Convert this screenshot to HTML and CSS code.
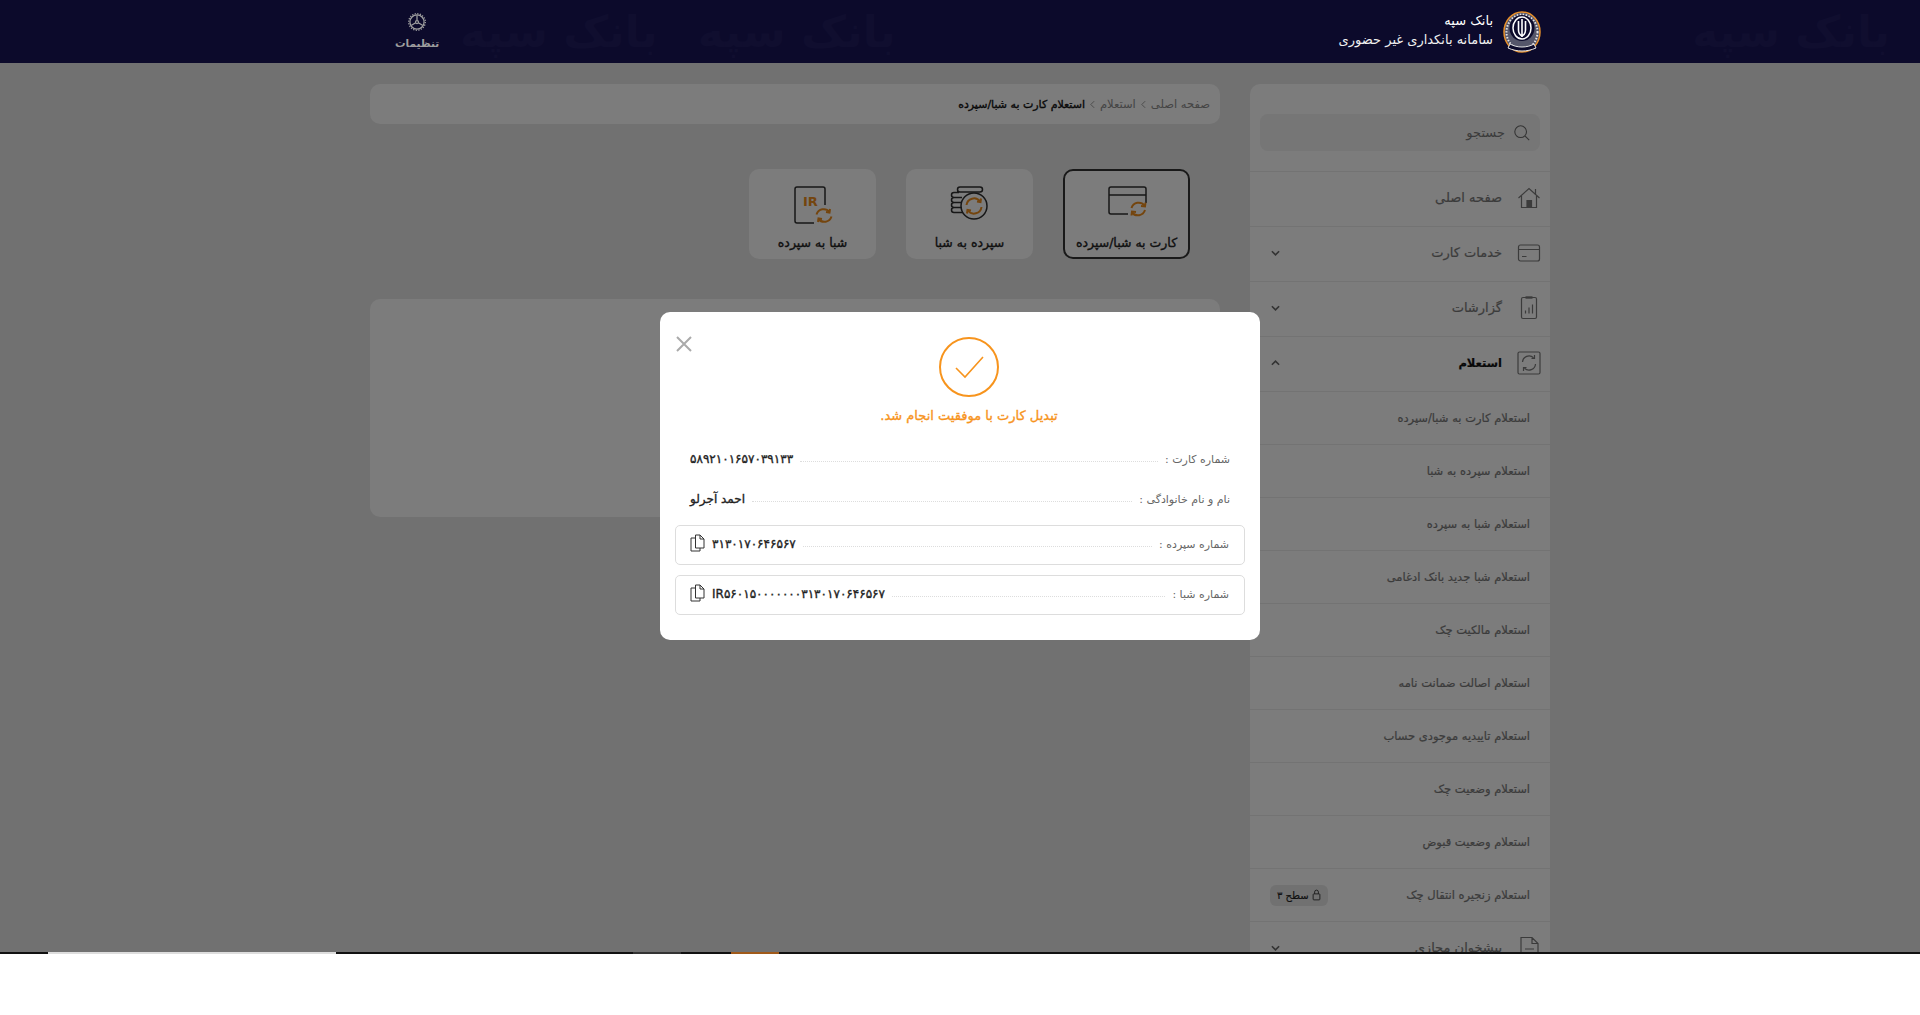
FILE: index.html
```html
<!DOCTYPE html>
<html lang="fa" dir="rtl">
<head>
    <meta charset="utf-8">
    <title>بانک سپه</title>
    <link rel="stylesheet" href="styles.css">
</head>
<body>
<div class="page">
    <header class="topbar">
        <div class="watermark">
            <span class="wm-right">بانک سپه</span><span>بانک سپه</span><span>بانک سپه</span>
        </div>
        <div class="brand">
            <svg class="logo" viewBox="0 0 38 42">
                <ellipse cx="19" cy="21" rx="18" ry="20" fill="#55566a" stroke="#e8902a" stroke-width="1.500"/>
                <ellipse cx="19" cy="21" rx="15.500" ry="17.500" fill="none" stroke="#e4e4e4" stroke-width="2" stroke-dasharray="1.500 1.500"/>
                <ellipse cx="19" cy="17" rx="12.500" ry="13" fill="#0c0a2b"/>
                <ellipse cx="19" cy="17" rx="9" ry="11" fill="none" stroke="#fff" stroke-width="1.500"/>
                <path d="M19 8v18M15.500 10v9c0 3 1.500 5 3.500 6M22.500 10v9c0 3-1.500 5-3.500 6" fill="none" stroke="#fff" stroke-width="1.600"/>
                <path d="M7 33c7 4 17 4 24 0l2 4c-9 4-19 4-28 0z" fill="#0c0a2b" stroke="#e4e4e4"/>
            </svg>
            <div class="brand-text">
                <strong>بانک سپه</strong>
                <span>سامانه بانکداری غیر حضوری</span>
            </div>
        </div>
        <a class="settings">
            <svg viewBox="0 0 24 24" width="20" height="20" fill="none" stroke="#a0a0a0" stroke-width="1.500">
                <circle cx="12" cy="12" r="8.500"/>
                <circle cx="12" cy="12" r="10" stroke-dasharray="1.500 1.640"/>
                <circle cx="12" cy="12" r="1.800"/>
                <path d="M12 10V4M10.400 13l-5 3M13.600 13l5 3"/>
            </svg>
            <span>تنظیمات</span>
        </a>
    </header>

    <div class="content">
        <aside class="sidebar">
            <div class="search-wrap">
                <div class="search">
                    <svg viewBox="0 0 20 20" width="18" height="18" fill="none" stroke="#666" stroke-width="1.200">
                        <circle cx="8.500" cy="8.500" r="6.500"/><path d="M13.500 13.500 18 18"/>
                    </svg>
                    <span>جستجو</span>
                </div>
            </div>
            <ul class="menu">
                <li class="menu-item">
                    <svg class="menu-icon" viewBox="0 0 24 24"><path d="M1.500 12 12 2.500 22.500 12M4.500 10v11.500h15V10M18.500 3v6"/><path class="solid" d="M10 14.500h4.500v7H10z"/></svg>
                    <span>صفحه اصلی</span>
                </li>
                <li class="menu-item">
                    <svg class="menu-icon" viewBox="0 0 24 24"><rect x="1.500" y="4" width="21" height="16" rx="2"/><path d="M1.500 8.500h21M5 15.500h4.500"/></svg>
                    <span>خدمات کارت</span>
                    <svg class="chev" viewBox="0 0 10 6"><path d="m1 1 4 4 4-4"/></svg>
                </li>
                <li class="menu-item">
                    <svg class="menu-icon" viewBox="0 0 24 24"><rect x="4.500" y="1.500" width="15" height="21" rx="1.500"/><path d="M8.500 1.500h7" stroke-width="2.400"/><path d="M8.500 17.500v-3M12 17.500v-6M15.500 17.500V8.500"/></svg>
                    <span>گزارشات</span>
                    <svg class="chev" viewBox="0 0 10 6"><path d="m1 1 4 4 4-4"/></svg>
                </li>
                <li class="menu-item open">
                    <svg class="menu-icon" viewBox="0 0 24 24"><rect x="1" y="1" width="22" height="22" rx="1.500"/><path d="M5.500 11a6.500 6.500 0 0 1 11-4.300M18.500 13a6.500 6.500 0 0 1-11 4.300M17.500 4v3.500h-3M6.500 20v-3.500h3"/></svg>
                    <span>استعلام</span>
                    <svg class="chev" viewBox="0 0 10 6"><path d="m1 5 4-4 4 4"/></svg>
                </li>
                <li class="sub-item">استعلام کارت به شبا/سپرده</li>
                <li class="sub-item">استعلام سپرده به شبا</li>
                <li class="sub-item">استعلام شبا به سپرده</li>
                <li class="sub-item">استعلام شبا جدید بانک ادغامی</li>
                <li class="sub-item">استعلام مالکیت چک</li>
                <li class="sub-item">استعلام اصالت ضمانت نامه</li>
                <li class="sub-item">استعلام تاییدیه موجودی حساب</li>
                <li class="sub-item">استعلام وضعیت چک</li>
                <li class="sub-item">استعلام وضعیت قبوض</li>
                <li class="sub-item">
                    <span>استعلام زنجیره انتقال چک</span>
                    <span class="level">
                        <svg viewBox="0 0 12 16" width="9" height="12" fill="none" stroke="#333" stroke-width="1.200"><rect x="1.500" y="6.500" width="9" height="8" rx="1"/><path d="M3.500 6.500V4a2.500 2.500 0 0 1 5 0v2.500"/></svg>
                        سطح ۳
                    </span>
                </li>
                <li class="menu-item">
                    <svg class="menu-icon" viewBox="0 0 24 24"><path d="M4 1.500h11l6 6v15H4zM15 1.500v6h6M8 13h9M8 17h9"/></svg>
                    <span>پیشخوان مجازی</span>
                    <svg class="chev" viewBox="0 0 10 6"><path d="m1 1 4 4 4-4"/></svg>
                </li>
            </ul>
        </aside>

        <main class="main">
            <nav class="crumbs">
                <span>صفحه اصلی</span>
                <svg class="crumb-sep" viewBox="0 0 6 10"><path d="M5 1 1 5l4 4"/></svg>
                <span>استعلام</span>
                <svg class="crumb-sep" viewBox="0 0 6 10"><path d="M5 1 1 5l4 4"/></svg>
                <strong>استعلام کارت به شبا/سپرده</strong>
            </nav>

            <div class="tiles">
                <div class="tile active">
                    <svg class="tile-icon" viewBox="0 0 40 38">
                        <path class="ink" d="M21 28H4a2 2 0 0 1-2-2V3a2 2 0 0 1 2-2h33a2 2 0 0 1 2 2v14M2 9h37"/>
                        <path class="accent" d="M24.500 22a7.500 7.500 0 0 1 13-2.500M38 24a7.500 7.500 0 0 1-13 2.500"/>
                        <path class="accent" d="m38.500 16.500-.5 4-4-.5M24.500 29.500l.5-4 4 .5"/>
                    </svg>
                    <span>کارت به شبا/سپرده</span>
                </div>
                <div class="tile">
                    <svg class="tile-icon" viewBox="0 0 40 38">
                        <path class="ink" d="M10 1h20a2.500 2.500 0 0 1 0 5H10a2.500 2.500 0 0 1 0-5zM7 6h8M4 6.500a2.500 2.500 0 0 0 0 5h8M4 6.500h5M4 11.500a2.500 2.500 0 0 0 0 5h7M4 16.500a2.500 2.500 0 0 0 0 5h8M4 21.500a2.500 2.500 0 0 0 0 5h9"/>
                        <circle class="ink" cx="24" cy="20" r="13"/>
                        <path class="accent" d="M16.500 19a7.500 7.500 0 0 1 13.500-3.500M31.500 21a7.500 7.500 0 0 1-13.500 3.500"/>
                        <path class="accent" d="m31 12.500-.5 3.500-3.500-.5M17 27.500l.5-3.500 3.500.5"/>
                    </svg>
                    <span>سپرده به شبا</span>
                </div>
                <div class="tile">
                    <svg class="tile-icon" viewBox="0 0 40 38">
                        <path class="ink" d="M21 37H4a2 2 0 0 1-2-2V3a2 2 0 0 1 2-2h26a2 2 0 0 1 2 2v16"/>
                        <text class="ir" x="10" y="20">IR</text>
                        <path class="accent" d="M23.500 28.500a7.500 7.500 0 0 1 13-2.500M38.500 30.500a7.500 7.500 0 0 1-13 2.500"/>
                        <path class="accent" d="m37 23-.5 3.500-3.500-.5M25 36l.5-3.500 3.500.5"/>
                    </svg>
                    <span>شبا به سپرده</span>
                </div>
            </div>

            <section class="panel"></section>
        </main>
    </div>

    <div class="overlay"></div>

    <div class="modal">
        <svg class="close" viewBox="0 0 16 16"><path d="m1 1 14 14M15 1 1 15"/></svg>
        <div class="result">
            <svg viewBox="0 0 60 60" width="60" height="60" fill="none" stroke="#f7941d" stroke-width="2">
                <circle cx="30" cy="30" r="29"/>
                <path d="m17 31 9 9 18-20" stroke-width="1.600"/>
            </svg>
            <p>تبدیل کارت با موفقیت انجام شد.</p>
        </div>
        <div class="row">
            <span class="label">شماره کارت :</span>
            <i class="dots"></i>
            <b class="value">۵۸۹۲۱۰۱۶۵۷۰۳۹۱۳۳</b>
        </div>
        <div class="row">
            <span class="label">نام و نام خانوادگی :</span>
            <i class="dots"></i>
            <b class="value">احمد آجرلو</b>
        </div>
        <div class="row boxed">
            <span class="label">شماره سپرده :</span>
            <i class="dots"></i>
            <b class="value">۳۱۳۰۱۷۰۶۴۶۵۶۷</b>
            <svg class="copy" viewBox="0 0 15 18"><path d="M5.500 1H10l4 4v9H5.500zM10 1v4h4M5.500 4H1v13h9v-3"/></svg>
        </div>
        <div class="row boxed">
            <span class="label">شماره شبا :</span>
            <i class="dots"></i>
            <b class="value">IR۵۶۰۱۵۰۰۰۰۰۰۰۳۱۳۰۱۷۰۶۴۶۵۶۷</b>
            <svg class="copy" viewBox="0 0 15 18"><path d="M5.500 1H10l4 4v9H5.500zM10 1v4h4M5.500 4H1v13h9v-3"/></svg>
        </div>
    </div>
</div>

<div class="strip">
    <i class="seg seg-white"></i>
    <i class="seg seg-gray"></i>
    <i class="seg seg-orange"></i>
</div>
</body>
</html>
```

FILE: styles.css
```css
* {
    box-sizing: border-box;
}

html, body {
    margin: 0;
    height: 100%;
    background: #fff;
}

body {
    font-family: "DejaVu Sans", "Noto Sans", sans-serif;
    overflow: hidden;
}

.page {
    position: relative;
    height: 952px;
    overflow: hidden;
    background: #e2e2e2;
}

/* top bar, it stays bright over the dim layer */
.topbar {
    position: relative;
    z-index: 2;
    height: 63px;
    background: #0c0a2b;
    display: flex;
    justify-content: space-between;
    align-items: center;
    padding: 0 379px 0 370px;
}

.watermark {
    position: absolute;
    inset: 0;
    display: flex;
    align-items: center;
    gap: 40px;
    padding: 0 30px 0 460px;
    color: #100e2f;
    font-size: 44px;
    line-height: 63px;
    font-weight: bold;
    white-space: nowrap;
}

.wm-right {
    margin-left: auto;
}

.brand {
    position: relative;
    display: flex;
    align-items: center;
    gap: 10px;
    color: #f0f0f0;
}

.logo {
    width: 38px;
    height: 42px;
}

.brand-text {
    display: flex;
    flex-direction: column;
    gap: 4px;
    padding-bottom: 4px;
    font-size: 13px;
}

.brand-text strong {
    font-weight: normal;
    color: #fff;
}

.settings {
    position: relative;
    display: flex;
    flex-direction: column;
    align-items: center;
    gap: 5px;
    padding-bottom: 3px;
    color: #9d9d9d;
    font-size: 10.500px;
    font-weight: bold;
    margin-left: 25px;
}

/* page body */
.content {
    display: flex;
    align-items: flex-start;
    gap: 30px;
    padding: 21px 370px 0;
}

.sidebar {
    flex: none;
    width: 300px;
    background: #f8f8f8;
    border-radius: 10px;
}

.search-wrap {
    padding: 30px 10px 20px;
}

.search {
    height: 37px;
    background: #ececec;
    border-radius: 8px;
    display: flex;
    align-items: center;
    gap: 8px;
    padding: 0 9px;
    color: #777;
    font-size: 13px;
}

.menu {
    list-style: none;
    margin: 0;
    padding: 0;
}

.menu-item {
    height: 55px;
    border-top: 1px solid #e6e6e6;
    display: flex;
    align-items: center;
    gap: 15px;
    padding: 0 9px 3px;
    font-size: 13px;
    color: #777;
    -webkit-text-stroke: .2px;
}

.menu-item.open {
    color: #111;
    font-size: 11.500px;
    font-weight: bold;
}

.menu-icon {
    flex: none;
    width: 24px;
    height: 24px;
    fill: none;
    stroke: #777;
    stroke-width: 1.200;
}

.menu-icon .solid {
    fill: #777;
}

.chev {
    width: 9px;
    height: 6px;
    margin-right: auto;
    margin-left: 12px;
    fill: none;
    stroke: #666;
    stroke-width: 1.800;
}

.sub-item {
    height: 53px;
    border-top: 1px solid #e6e6e6;
    display: flex;
    align-items: center;
    justify-content: space-between;
    padding: 0 20px;
    font-size: 11.500px;
    color: #777;
    -webkit-text-stroke: .2px;
}

.level {
    display: flex;
    align-items: center;
    gap: 3px;
    height: 21px;
    padding: 0 7px;
    background: #e2e2e2;
    border-radius: 6px;
    font-size: 10px;
    color: #222;
}

.main {
    flex: 1;
}

.crumbs {
    height: 40px;
    background: #f8f8f8;
    border-radius: 10px;
    display: flex;
    align-items: center;
    gap: 5px;
    padding: 0 10px;
    font-size: 11.500px;
    color: #888;
}

.crumbs strong {
    font-size: 11px;
    font-weight: normal;
    color: #111;
    -webkit-text-stroke: .35px;
}

.crumb-sep {
    width: 5px;
    height: 9px;
    fill: none;
    stroke: #888;
}

.tiles {
    display: flex;
    gap: 30px;
    padding: 45px 30px 0;
}

.tile {
    width: 127px;
    height: 90px;
    background: #f8f8f8;
    border-radius: 10px;
    display: flex;
    flex-direction: column;
    align-items: center;
    gap: 11px;
    padding-top: 17px;
    font-size: 12.500px;
    color: #222;
    -webkit-text-stroke: .35px;
}

.tile.active {
    border: 2px solid #333;
    padding-top: 15px;
}

.tile-icon {
    flex: none;
    width: 40px;
    height: 38px;
    -webkit-text-stroke: 0;
}

.tile-icon .ink {
    fill: none;
    stroke: #2e2e2e;
    stroke-width: 1.500;
}

.tile-icon .accent {
    fill: none;
    stroke: #e98a1c;
    stroke-width: 2;
}

.ir {
    fill: #e98a1c;
    font-size: 13px;
    font-weight: bold;
    direction: ltr;
}

.panel {
    margin-top: 40px;
    height: 218px;
    background: #f8f8f8;
    border-radius: 10px;
}

/* dim and dialog */
.overlay {
    position: absolute;
    inset: 0;
    background: rgba(0, 0, 0, .5);
}

.modal {
    position: absolute;
    left: 660px;
    top: 312px;
    width: 600px;
    height: 328px;
    background: #fff;
    border-radius: 10px;
    padding: 25px 15px 0;
    font-size: 11px;
    color: #666;
}

.close {
    position: absolute;
    left: 16px;
    top: 24px;
    width: 16px;
    height: 16px;
    fill: none;
    stroke: #aaa;
    stroke-width: 2;
}

.result {
    display: flex;
    flex-direction: column;
    align-items: center;
    gap: 11px;
    margin-right: -18px;
    height: 102px;
}

.result svg {
    flex: none;
}

.result p {
    margin: 0;
    color: #f7941d;
    font-size: 13px;
    -webkit-text-stroke: .35px;
}

.row {
    height: 40px;
    display: flex;
    align-items: center;
    gap: 7px;
    padding: 0 15px;
}

.dots {
    flex: 1;
    border-top: 1px dotted #ddd;
    margin-top: 4px;
}

.value {
    font-weight: normal;
    color: #222;
    font-size: 12px;
    -webkit-text-stroke: .35px;
}

.boxed {
    border: 1px solid #ddd;
    border-radius: 5px;
    margin-bottom: 10px;
    padding: 0 15px 2px 14px;
}

.row + .boxed {
    margin-top: 6px;
}

.boxed + .boxed {
    margin-top: 0;
}

.copy {
    flex: none;
    width: 15px;
    height: 18px;
    margin-bottom: 3px;
    fill: none;
    stroke: #333;
}

.strip {
    position: relative;
    height: 2px;
    background: #111;
}

.seg {
    position: absolute;
    top: 0;
    height: 2px;
}

.seg-white {
    left: 48px;
    width: 288px;
    background: #ddd;
}

.seg-gray {
    left: 633px;
    width: 48px;
    background: #333;
}

.seg-orange {
    left: 731px;
    width: 48px;
    background: #a05a1a;
}
```
